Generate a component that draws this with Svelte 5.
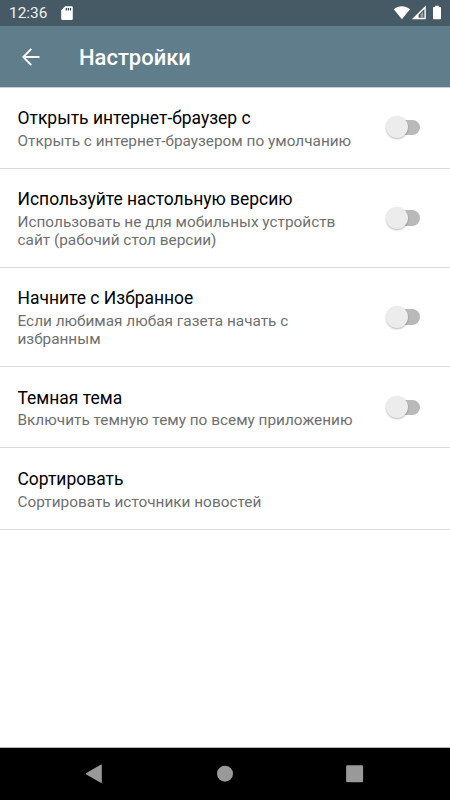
<script>
  const items = [
    { title: 'Открыть интернет-браузер с', lines: ['Открыть с интернет-браузером по умолчанию'], toggle: true },
    { title: 'Используйте настольную версию', lines: ['Использовать не для мобильных устройств', 'сайт (рабочий стол версии)'], toggle: true },
    { title: 'Начните с Избранное', lines: ['Если любимая любая газета начать с', 'избранным'], toggle: true },
    { title: 'Темная тема', lines: ['Включить темную тему по всему приложению'], toggle: true },
    { title: 'Сортировать', lines: ['Сортировать источники новостей'], toggle: false }
  ];
  let checked = $state(items.map(() => false));
</script>

<div class="screen">
  <div class="status">
    <span class="clock">12:36</span>
    <svg class="sd" width="12" height="15" viewBox="0 0 12 15">
      <path d="M4.2 .3H10.6Q11.8 .3 11.8 1.5V12.8Q11.8 14 10.6 14H1.4Q.2 14 .2 12.8V4.3Z" fill="#fff" />
      <path d="M4.7 2h1.2v2.4H4.7zM6.8 2H8v2.4H6.8zM8.9 2h1.2v2.4H8.9z" fill="#263a48" />
    </svg>
    <svg class="signals" width="50" height="16" viewBox="0 0 50 16">
      <path d="M.8 4.2C5.5 .2 12 .2 17 4.2L8.9 14.3Z" fill="#fff" />
      <path fill-rule="evenodd" d="M32.8 .4V14.2H18.8ZM31.4 4L25.6 9.7V12.8H31.4Z" fill="#fff" />
      <path d="M27.8 9.2L30.2 6.8V12.8H27.8Z" fill="#9aa7ad" />
      <path d="M42.2 .7h3.6v1.4h1.3q.9 0 .9.9v10.4q0 .9-.9.9h-6.2q-.9 0-.9-.9V3q0-.9.9-.9h1.3z" fill="#fff" />
    </svg>
  </div>
  <header>
    <button class="back" aria-label="Назад">
      <svg width="18" height="18" viewBox="0 0 18 18" fill="none" stroke="#fff" stroke-width="1.9">
        <path d="M9.3 .9L1.3 9l8 8.1M1.5 9h16" />
      </svg>
    </button>
    <h1>Настройки</h1>
  </header>
  <main>
    {#each items as item, i}
      <section class="row">
        <div class="text">
          <h2>{item.title}</h2>
          {#each item.lines as line}<p>{line}</p>{/each}
        </div>
        {#if item.toggle}
          <button class="switch" class:on={checked[i]} role="switch" aria-checked={checked[i]} aria-label={item.title} onclick={() => (checked[i] = !checked[i])}>
            <span class="thumb"></span>
          </button>
        {/if}
      </section>
    {/each}
  </main>
  <nav>
    <svg width="450" height="52" viewBox="0 0 450 52" fill="#999">
      <path d="M86.3 25Q85.6 25.7 86.3 26.4L100.7 34.8Q101.8 35.2 101.8 34.2V17.2Q101.8 16.2 100.7 16.8Z" />
      <circle cx="225" cy="25.7" r="8" />
      <rect x="346.1" y="17.2" width="17" height="17" rx="1.2" />
    </svg>
  </nav>
</div>

<style>
  :global(body) { margin: 0; }
  .screen {
    width: 450px;
    height: 800px;
    display: flex;
    flex-direction: column;
    background: #fff;
    font-family: Roboto, sans-serif;
    overflow: hidden;
  }
  button { border: 0; padding: 0; background: none; }
  h1, h2, p { margin: 0; white-space: nowrap; }
  .status {
    height: 26px;
    flex: none;
    background: #455a64;
    color: #fff;
    display: flex;
    align-items: flex-start;
    padding: 0 7px 0 9px;
    box-sizing: border-box;
  }
  .clock { font-size: 15.4px; line-height: 19px; padding-top: 4px; width: 52px; color: #eceff1; }
  .sd { margin-top: 6px; }
  .signals { margin: 5px 0 0 auto; }
  header {
    height: 61px;
    flex: none;
    background: #607d8b;
    border-bottom: 1px solid #c5cfd4;
    display: flex;
    align-items: center;
    padding-left: 22px;
    color: #fff;
  }
  .back { display: flex; width: 57px; }
  h1 { font-size: 21.97px; font-weight: 500; line-height: 26px; padding-top: 2px; }
  main { flex: 1; }
  .row {
    display: flex;
    align-items: center;
    justify-content: space-between;
    padding: 20.3px 28px 18px 17.5px;
    border-bottom: 1px solid #dcdcdc;
  }
  .row:first-child { padding-top: 20px; }
  h2 { font-size: 17.47px; font-weight: 400; line-height: 21px; padding-bottom: 2.9px; color: #000; }
  p { font-size: 15.36px; line-height: 18px; color: #6f6f6f; }
  .switch {
    position: relative;
    top: -1.5px;
    width: 36px;
    height: 24px;
    display: flex;
    align-items: center;
  }
  .switch::before {
    content: '';
    position: absolute;
    left: 2px;
    top: 4.5px;
    width: 32px;
    height: 15.5px;
    border-radius: 8px;
    background: #b9b9b9;
  }
  .thumb {
    position: relative;
    width: 22px;
    height: 22px;
    border-radius: 50%;
    background: #ececec;
    box-shadow: 0 1px 2px rgba(0, 0, 0, 0.28);
  }
  .on .thumb { left: 14px; }
  nav { height: 53px; flex: none; background: #000; border-top: 1px solid #b5b5b5; box-sizing: border-box; }
  nav svg { display: block; }
</style>
